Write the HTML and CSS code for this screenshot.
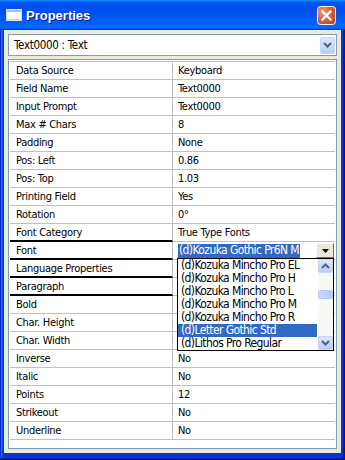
FILE: index.html
```html
<!DOCTYPE html>
<html>
<head>
<meta charset="utf-8">
<link rel="stylesheet" href="styles.css">
</head>
<body>
<div class="window">
  <div class="titlebar">
    <svg class="app-icon" width="16" height="12" viewBox="0 0 16 12"><rect x="0.5" y="0.5" width="15" height="11" fill="#fff" stroke="#d2def4"/><rect x="1" y="1" width="14" height="2" fill="#a9c4f0"/><rect x="1" y="10" width="14" height="1" fill="#c9d6ea"/></svg>
    <span class="title">Properties</span>
    <span class="close"><svg width="19" height="19" viewBox="0 0 19 19"><defs><radialGradient id="cg" cx="0.3" cy="0.3" r="0.95"><stop offset="0" stop-color="#f09a7e"/><stop offset="0.45" stop-color="#e25e38"/><stop offset="1" stop-color="#c23c1c"/></radialGradient></defs><rect x="0.5" y="0.5" width="18" height="18" rx="3" fill="url(#cg)" stroke="#fff"/><path d="M5.5 5.5 L13.5 13.5 M13.5 5.5 L5.5 13.5" stroke="#fff" stroke-width="2.3" stroke-linecap="square"/></svg></span>
  </div>
  <div class="client">
    <div class="combo">
      <span class="combo-text">Text0000 : Text</span>
      <span class="combo-btn"><svg width="9" height="6" viewBox="0 0 9 6"><path d="M1 1 L4.5 4.5 L8 1" fill="none" stroke="#4d6185" stroke-width="2"/></svg></span>
    </div>
    <div class="grid">
      <div class="rows">
        <div class="row"><div class="name">Data Source</div><div class="value">Keyboard</div></div>
        <div class="row"><div class="name">Field Name</div><div class="value">Text0000</div></div>
        <div class="row"><div class="name">Input Prompt</div><div class="value">Text0000</div></div>
        <div class="row"><div class="name">Max # Chars</div><div class="value">8</div></div>
        <div class="row"><div class="name">Padding</div><div class="value">None</div></div>
        <div class="row"><div class="name">Pos: Left</div><div class="value">0.86</div></div>
        <div class="row"><div class="name">Pos: Top</div><div class="value">1.03</div></div>
        <div class="row"><div class="name">Printing Field</div><div class="value">Yes</div></div>
        <div class="row"><div class="name">Rotation</div><div class="value">0°</div></div>
        <div class="row"><div class="name sep">Font Category</div><div class="value">True Type Fonts</div></div>
        <div class="row"><div class="name sep">Font</div>
          <div class="value editor">
            <span class="sel">(d)Kozuka Gothic Pr6N M</span>
            <span class="ddbtn"><svg width="7" height="4" viewBox="0 0 7 4"><path d="M0 0 H7 L3.5 4 Z" fill="#000"/></svg></span>
            <div class="list">
              <div class="items">
                <div class="item">(d)Kozuka Mincho Pro EL</div>
                <div class="item">(d)Kozuka Mincho Pro H</div>
                <div class="item">(d)Kozuka Mincho Pro L</div>
                <div class="item">(d)Kozuka Mincho Pro M</div>
                <div class="item">(d)Kozuka Mincho Pro R</div>
                <div class="item on">(d)Letter Gothic Std</div>
                <div class="item">(d)Lithos Pro Regular</div>
              </div>
              <div class="sb">
                <span class="sb-btn"><svg width="9" height="6" viewBox="0 0 9 6"><path d="M1 5 L4.5 1.5 L8 5" fill="none" stroke="#4d6185" stroke-width="2"/></svg></span>
                <span class="thumb"></span>
                <span class="sb-btn down"><svg width="9" height="6" viewBox="0 0 9 6"><path d="M1 1 L4.5 4.5 L8 1" fill="none" stroke="#4d6185" stroke-width="2"/></svg></span>
              </div>
            </div>
          </div>
        </div>
        <div class="row"><div class="name sep">Language Properties</div><div class="value"></div></div>
        <div class="row"><div class="name sep">Paragraph</div><div class="value"></div></div>
        <div class="row"><div class="name">Bold</div><div class="value"></div></div>
        <div class="row"><div class="name">Char. Height</div><div class="value"></div></div>
        <div class="row"><div class="name">Char. Width</div><div class="value"></div></div>
        <div class="row"><div class="name">Inverse</div><div class="value">No</div></div>
        <div class="row"><div class="name">Italic</div><div class="value">No</div></div>
        <div class="row"><div class="name">Points</div><div class="value">12</div></div>
        <div class="row"><div class="name">Strikeout</div><div class="value">No</div></div>
        <div class="row"><div class="name">Underline</div><div class="value">No</div></div>
      </div>
    </div>
  </div>
</div>
</body>
</html>
```

FILE: styles.css
```css
* { box-sizing: border-box; }
body {
  margin: 0;
  width: 345px;
  height: 460px;
  overflow: hidden;
  background: #0831d9;
  font-family: "DejaVu Sans Condensed", "Liberation Sans", Arial, sans-serif;
  color: #000;
}
.window {
  width: 345px;
  height: 460px;
  display: flex;
  flex-direction: column;
  background: #0831d9;
  box-shadow: inset -1px -1px #00138c, inset 1px 1px #0831d9, inset -2px -2px #001ea0, inset 2px 2px #166aee, inset -3px -3px #003bda, inset 3px 3px #0855dd;
}
.titlebar {
  height: 30px;
  flex: none;
  display: flex;
  align-items: center;
  padding: 0 9px 0 6px;
  background: linear-gradient(180deg, #0997ff, #0053ee 8%, #0050ee 40%, #0066ff 88%, #0066ff 93%, #005bff 95%, #003dd7 96%, #003dd7);
}
.app-icon { flex: none; margin-right: 4px; }
.title {
  flex: 1;
  color: #fff;
  font-family: "Liberation Sans", Arial, sans-serif;
  font-weight: bold;
  font-size: 13px;
  text-shadow: 1px 1px #0f1089;
}
.close { width: 19px; height: 19px; display: flex; }
.client {
  flex: 1;
  margin: 0 4px 7px;
  background: #ece9d8;
  padding: 4px;
  display: flex;
  flex-direction: column;
  gap: 3px;
}
.combo {
  height: 22px;
  flex: none;
  border: 1px solid #7f9db9;
  background: #fff;
  display: flex;
  align-items: center;
  padding: 0 1px 0 5px;
}
.combo-text { flex: 1; font-size: 11.5px; letter-spacing: -0.3px; padding-bottom: 1px; }
.combo-btn {
  width: 15px;
  height: 17px;
  border-radius: 2px;
  background: linear-gradient(#dde7fd, #b8ccf9);
  border: 1px solid #c5d5fb;
  display: flex;
  align-items: center;
  justify-content: center;
}
.grid {
  flex: 1;
  border: 1px solid #7f9db9;
  background: #fff;
  padding: 1px;
}
.rows { border-top: 1px solid #c0c0c0; }
.row {
  display: grid;
  grid-template-columns: 163px 1fr;
  height: 18px;
  font-size: 11px;
  letter-spacing: -0.3px;
}
.name, .value {
  border-bottom: 1px solid #c0c0c0;
  display: flex;
  align-items: center;
  white-space: nowrap;
  padding-bottom: 1px;
}
.name { border-right: 1px solid #c0c0c0; padding-left: 6px; }
.name.sep { border-bottom: 2px solid #000; padding-bottom: 0; }
.value { padding-left: 5px; position: relative; }
.value.editor { padding: 1px 1px 1px 5px; }
.sel {
  background: #316ac5;
  color: #fff;
  font-size: 12px;
  letter-spacing: -0.6px;
  height: 14px;
  line-height: 13px;
  padding: 0 1px;
}
.ddbtn {
  margin-left: auto;
  width: 18px;
  height: 15px;
  background: #ece9d8;
  border: 1px solid;
  border-color: #fff #716f64 #716f64 #fff;
  display: flex;
  align-items: center;
  justify-content: center;
}
.list {
  position: absolute;
  left: 4px;
  top: 16px;
  width: 157px;
  height: 93px;
  border: 1px solid #000;
  background: #fff;
  display: flex;
  z-index: 2;
}
.items { flex: 1; }
.item {
  height: 13px;
  line-height: 12px;
  font-size: 12px;
  letter-spacing: -0.6px;
  padding-left: 3px;
  margin-right: 1px;
  white-space: nowrap;
}
.item.on { background: #316ac5; color: #fff; }
.sb {
  width: 15px;
  background: #f8f8f4;
  display: flex;
  flex-direction: column;
}
.sb-btn {
  height: 14px;
  border-radius: 2px;
  background: linear-gradient(#dde7fd, #b8ccf9);
  border: 1px solid #c5d5fb;
  display: flex;
  align-items: center;
  justify-content: center;
}
.sb-btn.down { margin-top: auto; }
.thumb {
  margin-top: 17px;
  height: 9px;
  border-radius: 2px;
  background: linear-gradient(90deg, #c9d8fc, #b6cbf8);
  border: 1px solid #b1c6f5;
}
```
